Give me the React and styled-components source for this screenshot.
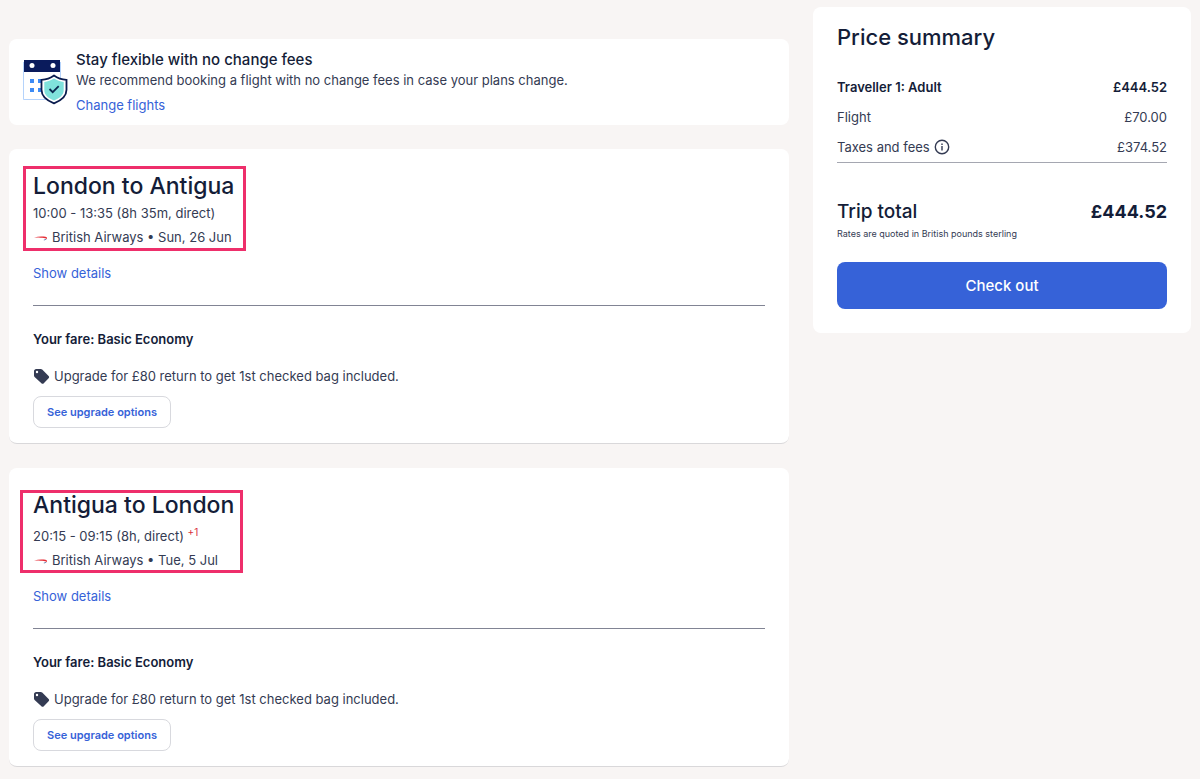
import React from "react";
import styled, { createGlobalStyle } from "styled-components";

const GlobalStyle = createGlobalStyle`
  * {
    box-sizing: border-box;
  }

  body {
    margin: 0;
    background-color: #f8f5f4;
    color: #343b53;
    font-family: "Inter", "Liberation Sans", sans-serif;
    font-size: 13px;
    line-height: 24px;
  }
`;

const Page = styled.main`
  display: grid;
  grid-template-columns: minmax(0, 1fr) 378px;
  align-items: start;
  gap: 24px;
  padding: 7px 9px 12px;
`;

const Trips = styled.div`
  display: flex;
  flex-direction: column;
  gap: 24px;
  padding-top: 32px;
`;

const Panel = styled.section`
  background-color: #ffffff;
  border-radius: 8px;
`;

const Banner = styled(Panel)`
  display: flex;
  align-items: flex-start;
  gap: 8px;
  padding: 11px 14px 10px;
  line-height: 20px;
`;

const BannerTitle = styled.h2`
  margin: 0;
  color: #141d38;
  font-size: 15px;
  font-weight: 500;
`;

const Text = styled.p`
  margin: 0;
`;

const Link = styled.a`
  display: block;
  width: fit-content;
  margin-top: ${({ $gap }) => $gap}px;
  color: #3662d8;
  text-decoration: none;
`;

const FlightCard = styled(Panel)`
  padding: 25px 24px 15px;
  border-bottom: 1px solid #d9d8da;
`;

const Summary = styled.div`
  position: relative;
`;

const Highlight = styled.div`
  position: absolute;
  top: ${({ $top }) => $top}px;
  left: ${({ $left }) => $left}px;
  width: 223px;
  height: ${({ $height }) => $height}px;
  border: 3px solid #ee2f6b;
  pointer-events: none;
`;

const Route = styled.h2`
  margin: 0 0 3px;
  color: #141d38;
  font-size: 23px;
  font-weight: 500;
`;

const NextDay = styled.sup`
  color: #d9303e;
  font-size: 10px;
`;

const IconLine = styled.p`
  display: flex;
  align-items: center;
  gap: 4px;
  margin: 0;
`;

const Divider = styled.hr`
  height: 1px;
  margin: 20px 0 21px;
  border: 0;
  background-color: #818494;
`;

const Fare = styled.h3`
  margin: 0 0 13px;
  color: #141d38;
  font-size: 13px;
  font-weight: 600;
`;

const UpgradeButton = styled.button`
  height: 32px;
  margin-top: 8px;
  padding: 0 13px;
  border: 1px solid #d8d9de;
  border-radius: 8px;
  background-color: #ffffff;
  color: #3662d8;
  font-family: inherit;
  font-size: 11px;
  font-weight: 600;
`;

const PricePanel = styled(Panel)`
  padding: 16px 24px 24px;
`;

const PriceTitle = styled.h2`
  margin: 0 0 21px;
  color: #141d38;
  font-size: 22px;
  font-weight: 500;
  line-height: 28px;
`;

const PriceTable = styled.table`
  width: 100%;
  border-collapse: collapse;
  border-bottom: 1px solid #a5a7b1;
`;

const PriceRow = styled.tr`
  height: 30px;
  color: ${({ $strong }) => ($strong ? "#141d38" : "inherit")};
  font-weight: ${({ $strong }) => ($strong ? 600 : 400)};
`;

const Label = styled.th`
  padding: 0;
  font-weight: inherit;
  text-align: left;
`;

const LabelContent = styled.span`
  display: flex;
  align-items: center;
  gap: 4px;
`;

const Amount = styled.td`
  padding: 0;
  text-align: right;
`;

const Total = styled.div`
  display: flex;
  justify-content: space-between;
  margin-top: 35px;
  color: #141d38;
  font-size: 19px;
  font-weight: 500;
  line-height: 28px;
`;

const TotalAmount = styled.strong`
  font-size: 18px;
  font-weight: 700;
`;

const Note = styled.p`
  margin: 0 0 20px;
  font-size: 9px;
  line-height: 16px;
`;

const CheckoutButton = styled.button`
  width: 100%;
  height: 47px;
  border: 0;
  border-radius: 8px;
  background-color: #3662d8;
  color: #ffffff;
  font-family: inherit;
  font-size: 15px;
  font-weight: 500;
`;

const CalendarIcon = () => (
  <svg width="45" height="64" viewBox="0 -9 45 64" aria-hidden="true">
    <path d="M.5 3v37.500h37V3" fill="#fff" stroke="#b5d3fb" />
    <path d="M1 1h36v12H1z" fill="#0a1b5c" />
    <circle cx="9" cy="6.500" r="2.500" fill="#fff" />
    <circle cx="30" cy="6.500" r="2.500" fill="#fff" />
    <path d="M7 20h4v4H7zm8 0h4v4h-4zM7 29h4v4H7zm8 0h4v4h-4z" fill="#3d8bf5" />
    <path
      d="M31 16.500c4 3 8.200 4.100 12.500 4.300v10c0 6.500-4.500 10.500-12.500 13.500-8-3-12.500-7-12.500-13.500v-10c4.300-.2 8.500-1.300 12.500-4.300z"
      fill="#fff"
      stroke="#0a1b4d"
      strokeWidth="1.800"
    />
    <path
      d="M31 19.500c3 2 6.200 3 9.700 3.400V31c0 5-3.700 8-9.700 10.500-6-2.500-9.700-5.500-9.700-10.500v-8.100c3.500-.4 6.700-1.400 9.700-3.400z"
      fill="#80e2dc"
    />
    <path
      d="M26.500 30l3.200 3.200 6-6"
      fill="none"
      stroke="#0a2850"
      strokeWidth="1.800"
    />
  </svg>
);

const AirlineLogo = () => (
  <svg width="15" height="16" viewBox="0 0 15 16" aria-hidden="true">
    <path
      d="M1 8.600c4-1.300 8.500-1.500 11.500-.8 1.800.5 2 1.500.9 2.200C12.500 9 8 8.900 1 8.600z"
      fill="#e52b34"
    />
    <path d="M10.500 11c1.300.5 2.500.2 3.200-.9-.9.200-2 .3-3.200.9z" fill="#35558f" />
  </svg>
);

const TagIcon = () => (
  <svg width="17" height="17" viewBox="0 0 17 17" aria-hidden="true">
    <path
      fillRule="evenodd"
      d="M1 3.200C1 2 2 1 3.200 1h4.500c.6 0 1.100.2 1.500.6l6.400 6.300c.7.700.7 1.700 0 2.400l-4.800 5c-.7.700-1.700.7-2.400 0L1.600 8.900C1.200 8.500 1 8 1 7.500V3.200zM4 2.800A1.200 1.200 0 104 5.200 1.200 1.200 0 004 2.800z"
      fill="#343b53"
    />
  </svg>
);

const InfoIcon = () => (
  <svg width="16" height="16" viewBox="0 0 16 16" aria-hidden="true">
    <circle cx="8" cy="8" r="6.700" fill="none" stroke="#343b53" strokeWidth="1.400" />
    <path d="M7.300 7h1.400v4.500H7.300zM7.300 4.500h1.400v1.400H7.300z" fill="#343b53" />
  </svg>
);

const flights = [
  {
    route: "London to Antigua",
    time: "10:00 - 13:35 (8h 35m, direct)",
    date: "Sun, 26 Jun",
    highlight: { $top: -8, $left: -10, $height: 85 },
  },
  {
    route: "Antigua to London",
    time: "20:15 - 09:15 (8h, direct)",
    nextDay: "+1",
    date: "Tue, 5 Jul",
    highlight: { $top: -3, $left: -13, $height: 83 },
  },
];

const Flight = ({ route, time, nextDay, date, highlight }) => (
  <FlightCard>
    <Summary>
      <Route>{route}</Route>
      <Text>
        {time} {nextDay && <NextDay>{nextDay}</NextDay>}
      </Text>
      <IconLine>
        <AirlineLogo />
        British Airways • {date}
      </IconLine>
      <Highlight {...highlight} />
    </Summary>
    <Link href="#details" $gap={12}>
      Show details
    </Link>
    <Divider />
    <Fare>Your fare: Basic Economy</Fare>
    <IconLine>
      <TagIcon />
      Upgrade for £80 return to get 1st checked bag included.
    </IconLine>
    <UpgradeButton type="button">See upgrade options</UpgradeButton>
  </FlightCard>
);

const App = () => (
  <>
    <GlobalStyle />
    <Page>
      <Trips>
        <Banner>
          <CalendarIcon />
          <div>
            <BannerTitle>Stay flexible with no change fees</BannerTitle>
            <Text>
              We recommend booking a flight with no change fees in case your
              plans change.
            </Text>
            <Link href="#flights" $gap={5}>
              Change flights
            </Link>
          </div>
        </Banner>
        {flights.map((flight) => (
          <Flight key={flight.route} {...flight} />
        ))}
      </Trips>
      <PricePanel>
        <PriceTitle>Price summary</PriceTitle>
        <PriceTable>
          <tbody>
            <PriceRow $strong>
              <Label scope="row">Traveller 1: Adult</Label>
              <Amount>£444.52</Amount>
            </PriceRow>
            <PriceRow>
              <Label scope="row">Flight</Label>
              <Amount>£70.00</Amount>
            </PriceRow>
            <PriceRow>
              <Label scope="row">
                <LabelContent>
                  Taxes and fees <InfoIcon />
                </LabelContent>
              </Label>
              <Amount>£374.52</Amount>
            </PriceRow>
          </tbody>
        </PriceTable>
        <Total>
          <span>Trip total</span>
          <TotalAmount>£444.52</TotalAmount>
        </Total>
        <Note>Rates are quoted in British pounds sterling</Note>
        <CheckoutButton type="button">Check out</CheckoutButton>
      </PricePanel>
    </Page>
  </>
);

export default App;
